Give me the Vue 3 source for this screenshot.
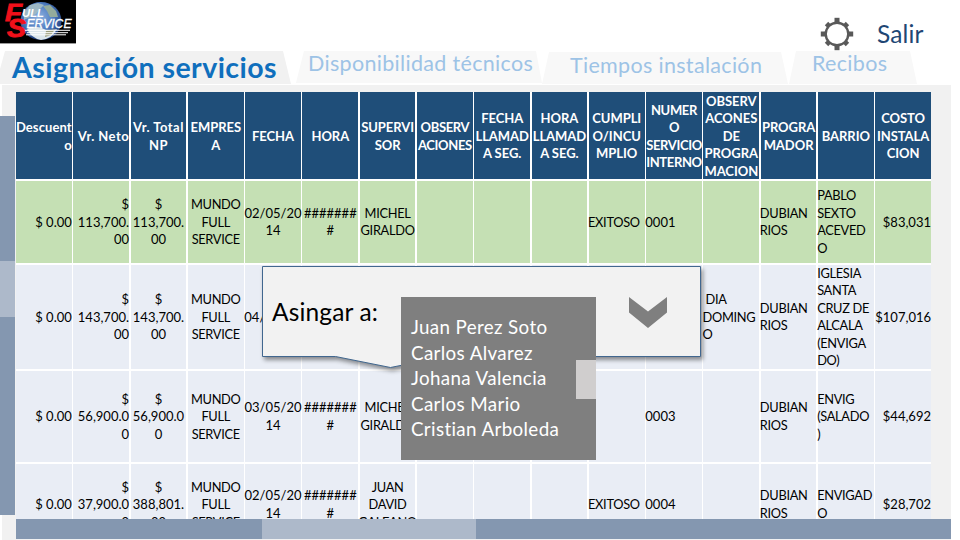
<script setup>
const headers = [
  ['Descuent', 'o'],
  ['Vr. Neto'],
  ['Vr. Total', 'NP'],
  ['EMPRES', 'A'],
  ['FECHA'],
  ['HORA'],
  ['SUPERVI', 'SOR'],
  ['OBSERV', 'ACIONES'],
  ['FECHA', 'LLAMAD', 'A SEG.'],
  ['HORA', 'LLAMAD', 'A SEG.'],
  ['CUMPLI', 'O/INCU', 'MPLIO'],
  ['NUMER', 'O', 'SERVICIO', 'INTERNO'],
  ['OBSERV', 'ACONES', 'DE', 'PROGRA', 'MACION'],
  ['PROGRA', 'MADOR'],
  ['BARRIO'],
  ['COSTO', 'INSTALA', 'CION'],
]

const company = ['MUNDO', 'FULL', 'SERVICE']
const hashes = ['#######', '#']
const planner = ['DUBIAN', 'RIOS']

const rows = [
  [['$ 0.00'], ['$', '113,700.', '00'], ['$', '113,700.', '00'], company, ['02/05/20', '14'], hashes, ['MICHEL', 'GIRALDO'], [], [], [], ['EXITOSO'], ['0001'], [], planner, ['PABLO', 'SEXTO', 'ACEVED', 'O'], ['$83,031']],
  [['$ 0.00'], ['$', '143,700.', '00'], ['$', '143,700.', '00'], company, ['04/'], [], [], [], [], [], [], [], ['\u00a0DIA', 'DOMING', 'O'], planner, ['IGLESIA', 'SANTA', 'CRUZ DE', 'ALCALA', '(ENVIGA', 'DO)'], ['$107,016']],
  [['$ 0.00'], ['$', '56,900.0', '0'], ['$', '56,900.0', '0'], company, ['03/05/20', '14'], hashes, ['MICHEL', 'GIRALDO'], [], [], [], [], ['0003'], [], planner, ['ENVIG', '(SALADO', ')'], ['$44,692']],
  [['$ 0.00'], ['$', '37,900.0', '0'], ['$', '388,801.', '00'], company, ['02/05/20', '14'], hashes, ['JUAN', 'DAVID', 'GALEANO'], [], [], [], ['EXITOSO'], ['0004'], [], planner, ['ENVIGAD', 'O'], ['$28,702']],
]

const technicians = ['Juan Perez Soto', 'Carlos Alvarez', 'Johana Valencia', 'Carlos Mario', 'Cristian Arboleda']

const wordColumns = [3, 6, 10, 12, 13, 14]

function classesOf(row, col, cell) {
  let align = 'center'
  if (col < 2 || col === 15) align = 'right'
  else if (col >= 10 || cell[0] === '04/') align = 'left'
  return [align, { picked: row === 0, words: wordColumns.includes(col) }]
}
</script>

<template>
  <div class="page">
    <header class="top">
      <svg class="logo" width="76" height="44" viewBox="0 0 76 44">
        <defs>
          <radialGradient id="sea" cx="45%" cy="40%" r="62%">
            <stop offset="0" stop-color="#8fb2e0" />
            <stop offset="0.6" stop-color="#4a78bd" />
            <stop offset="1" stop-color="#1d3a78" />
          </radialGradient>
        </defs>
        <rect width="76" height="43.4" fill="#000" />
        <ellipse cx="41" cy="21" rx="20.500" ry="19" fill="url(#sea)" />
        <path d="M24 12 L30 5 L38 3 L44 5 L40 9 L36 14 L30 17 L24 20Z" fill="#9db8c4" />
        <path d="M43 6 L50 5 L56 11 L58 17 L50 17 L47 11Z" fill="#93ab9c" />
        <path d="M27 29 Q36 24 46 30 Q52 31 57 29 Q52 39 41 40 Q31 38 27 29Z" fill="#dbe5ea" />
        <path d="M46 31 L55 29 L51 35 L45 37Z" fill="#9a9c79" />
        <text class="brand red" x="5" y="21" font-size="24" textLength="17" lengthAdjust="spacingAndGlyphs">F</text>
        <text class="brand red" x="7" y="37" font-size="25" textLength="19" lengthAdjust="spacingAndGlyphs">S</text>
        <text class="brand white" x="22" y="17" font-size="11.500" textLength="22" lengthAdjust="spacingAndGlyphs">ULL</text>
        <text class="brand white thin" x="26.500" y="28" font-size="13" textLength="45" lengthAdjust="spacingAndGlyphs">ERVICE</text>
        <path d="M25 30.300H70M27 32.700H68M26 34.800H66" stroke="#fff" stroke-width="1" />
      </svg>
      <div class="actions">
        <svg class="gear" width="34" height="34" viewBox="-17 -17 34 34">
          <g fill="#595959">
            <path v-for="n in 4" :key="n" d="M-2.500-16.200H2.500V-11H-2.500Z" :transform="`rotate(${n * 90})`" />
            <path v-for="n in 4" :key="'d' + n" d="M-2.400-14.800H2.400V-10.500H-2.400Z" :transform="`rotate(${n * 90 + 45})`" />
          </g>
          <circle r="11.300" fill="#fff" stroke="#595959" stroke-width="2.400" />
        </svg>
        <span class="exit">Salir</span>
      </div>
    </header>

    <nav class="tabs">
      <div class="tab active"><span>Asignación servicios</span></div>
      <div class="tab second"><span>Disponibilidad técnicos</span></div>
      <div class="tab third"><span>Tiempos instalación</span></div>
      <div class="tab fourth"><span>Recibos</span></div>
    </nav>

    <main class="panel">
      <div class="vscroll"><div class="vthumb"></div></div>
      <div class="content">
        <div class="grid">
          <div v-for="(h, c) in headers" :key="'h' + c" class="cell head" :class="[c < 2 ? 'right' : 'center', { wide: c === 1 || c === 2, tight: c === 11 || c === 7, first: c === 0 }]">
            <div v-for="(line, i) in h" :key="i" class="line">{{ line }}</div>
          </div>
          <template v-for="(row, r) in rows" :key="r">
            <div v-for="(cell, c) in row" :key="c" class="cell" :class="classesOf(r, c, cell)">
              <div v-for="(line, i) in cell" :key="i" class="line">{{ line }}</div>
            </div>
          </template>
        </div>
      </div>
      <div class="hscroll"><div class="hthumb"></div></div>
    </main>

    <section class="callout">
      <svg class="bubble" width="460" height="120" viewBox="0 0 460 120">
        <path d="M.5 .5H438.500V90.500H183L128.500 101.500L73.500 90.500H.5Z" fill="#f2f2f2" stroke="#41678f" />
      </svg>
      <span class="ask">Asingar a:</span>
      <svg class="chevron" width="38" height="31" viewBox="0 0 38 31">
        <path d="M0 0L19 14.500L38 0V15.500L19 31L0 15.500Z" fill="#7f7f7f" />
      </svg>
    </section>
    <ul class="menu">
      <li v-for="t in technicians" :key="t">{{ t }}</li>
      <div class="mthumb"></div>
    </ul>
  </div>
</template>

<style>
body {
  margin: 0;
  background: #fff;
}
</style>

<style scoped>
.page {
  position: relative;
  display: flex;
  flex-direction: column;
  width: 960px;
  height: 540px;
  overflow: hidden;
  background: #fff;
  font-family: Lato, 'Open Sans', sans-serif;
}
.top {
  display: flex;
  justify-content: space-between;
  height: 51px;
}
.logo {
  display: block;
}
.brand {
  font-family: 'Liberation Sans', sans-serif;
  font-style: italic;
  font-weight: 700;
}
.red {
  fill: #f0101a;
  stroke: #f0101a;
  stroke-width: 0.8px;
}
.white {
  fill: #fff;
}
.thin {
  font-weight: 400;
  stroke: #fff;
  stroke-width: 0.3px;
}
.actions {
  display: flex;
  align-items: flex-start;
  width: 140px;
}
.gear {
  margin-top: 17px;
}
.exit {
  margin: 19px 0 0 23px;
  font-size: 24.500px;
  letter-spacing: 0.15px;
  line-height: 30px;
  color: #1f4774;
}
.tabs {
  display: flex;
  align-items: flex-start;
  height: 34px;
}
.tab {
  height: 32px;
  background: #f8f8f8;
  color: #9dc3e6;
  font-size: 21.500px;
  letter-spacing: 0.32px;
  line-height: 25px;
  white-space: nowrap;
  box-sizing: border-box;
}
.active {
  width: 291px;
  height: 33px;
  padding-left: 12px;
  background: #f1f1f1;
  color: #0f6fbd;
  font-size: 28.500px;
  font-weight: 700;
  letter-spacing: 0.45px;
  line-height: 32px;
  clip-path: polygon(5px 0, 283px 0, 291px 100%, 0 100%, 0 18px);
}
.second {
  width: 246px;
  margin-left: 5px;
  padding-left: 12px;
  clip-path: polygon(8px 0, 240px 0, 246px 100%, 0 100%);
}
.third {
  width: 246px;
  margin: 1px 0 0;
  padding-left: 28px;
  line-height: 27px;
  clip-path: polygon(7px 0, 239px 0, 246px 100%, 0 100%);
}
.fourth {
  width: 128px;
  height: 33px;
  margin-left: 1px;
  padding-left: 23px;
  clip-path: polygon(7px 0, 121px 0, 128px 100%, 0 100%);
}
.panel {
  display: grid;
  grid-template-columns: 16px 935px;
  grid-template-rows: 434px 20px 1px;
  width: 951px;
  height: 455px;
  background: linear-gradient(90deg, #fff 2px, #f1f1f1 2px);
}
.vscroll {
  width: 15px;
  height: 399px;
  margin-top: 31px;
  padding-top: 145px;
  box-sizing: border-box;
  background: #8497b0;
}
.vthumb {
  height: 56px;
  background: #adb9ca;
}
.content {
  overflow: hidden;
  padding: 7px 0 0;
}
.grid {
  display: grid;
  width: 915px;
  grid-template-columns: repeat(16, 1fr);
  grid-template-rows: 87px 82.500px 104.500px 91.500px 81.500px;
  gap: 1.500px;
  background: #fff;
}
.cell {
  display: flex;
  flex-direction: column;
  justify-content: center;
  min-width: 0;
  padding-top: 1px;
  box-sizing: border-box;
  background: #e9edf5;
  color: #000;
  font-size: 13px;
  line-height: 17.500px;
  white-space: nowrap;
}
.words {
  font-size: 12.800px;
  letter-spacing: -0.3px;
}
.picked {
  background: #c5e0b4;
}
.head {
  padding-top: 2px;
  background: #1f4e79;
  color: #fff;
  font-weight: 700;
  letter-spacing: -0.05px;
}
.first {
  letter-spacing: 0.1px;
}
.wide {
  letter-spacing: 0.45px;
}
.tight {
  letter-spacing: -0.35px;
}
.center {
  align-items: center;
}
.right {
  align-items: flex-end;
}
.left {
  align-items: flex-start;
}
.left .line {
  margin-left: -0.8px;
}
.line {
  height: 17.500px;
}
.hscroll {
  grid-column: 2;
  background: #8497b0;
}
.hthumb {
  width: 214px;
  height: 20px;
  margin-left: 246px;
  background: #adb9ca;
}
.callout {
  position: absolute;
  left: 262px;
  top: 266px;
  display: flex;
  width: 439px;
  height: 91px;
}
.bubble {
  position: absolute;
  left: 0;
  top: 0;
  overflow: visible;
  filter: drop-shadow(2px 3px 2px rgba(0, 0, 0, 0.42));
}
.ask {
  position: relative;
  margin: 31px 0 0 10px;
  font-size: 24.500px;
  letter-spacing: 0.15px;
  line-height: 30px;
  white-space: nowrap;
}
.chevron {
  position: absolute;
  left: 367px;
  top: 31px;
}
.menu {
  position: absolute;
  left: 401px;
  top: 297px;
  width: 195px;
  height: 163px;
  margin: 0;
  padding: 17px 0 0 10px;
  box-sizing: border-box;
  list-style: none;
  background: #7f7f7f;
  color: #fff;
  font-size: 18.800px;
  letter-spacing: 0.36px;
  line-height: 25.600px;
}
.mthumb {
  position: absolute;
  right: 0;
  top: 63px;
  width: 20px;
  height: 39px;
  background: #d0cece;
}
</style>
